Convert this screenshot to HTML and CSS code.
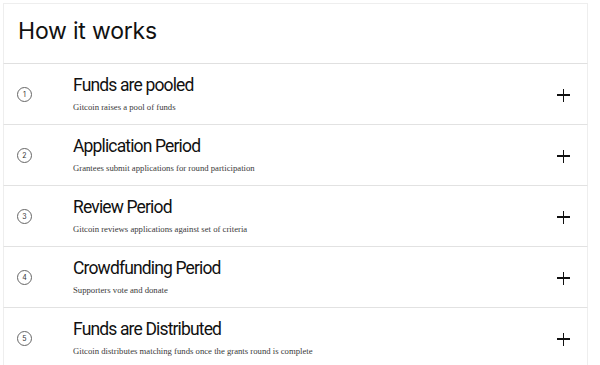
FILE: index.html
```html
<!DOCTYPE html>
<html>
<head>
<meta charset="utf-8">
<link rel="stylesheet" href="styles.css">
</head>
<body>
<section class="works">
  <header class="works-head"><h2>How it works</h2></header>
  <div class="step">
    <span class="num">1</span>
    <div class="text"><h3>Funds are pooled</h3><p>Gitcoin raises a pool of funds</p></div>
    <span class="plus"></span>
  </div>
  <div class="step">
    <span class="num">2</span>
    <div class="text"><h3>Application Period</h3><p>Grantees submit applications for round participation</p></div>
    <span class="plus"></span>
  </div>
  <div class="step">
    <span class="num">3</span>
    <div class="text"><h3>Review Period</h3><p>Gitcoin reviews applications against set of criteria</p></div>
    <span class="plus"></span>
  </div>
  <div class="step">
    <span class="num">4</span>
    <div class="text"><h3>Crowdfunding Period</h3><p>Supporters vote and donate</p></div>
    <span class="plus"></span>
  </div>
  <div class="step">
    <span class="num">5</span>
    <div class="text"><h3>Funds are Distributed</h3><p>Gitcoin distributes matching funds once the grants round is complete</p></div>
    <span class="plus"></span>
  </div>
</section>
</body>
</html>
```

FILE: styles.css
```css
html, body { margin: 0; padding: 0; background: #fff; }
body { padding: 3px 12px 0 3px; font-family: Inter, "Liberation Sans", sans-serif; color: #111; }
.works { display: flex; flex-direction: column; }
.works-head {
  height: 61px;
  border: 1px solid #eee;
  border-bottom: 1px solid #e0e0e0;
  box-sizing: border-box;
  display: flex; align-items: center;
  padding-left: 14px;
}
.works-head h2 { margin: 0; font-weight: 400; font-size: 23px; letter-spacing: -0.2px; padding-bottom: 6px; }
.step {
  height: 61px;
  box-sizing: border-box;
  border: 1px solid #eee;
  border-top: none;
  border-bottom: 1px solid #e2e2e2;
  display: flex; align-items: center;
  padding-left: 13px; padding-right: 17px;
}
.num {
  width: 15px; height: 15px; border: 1px solid #666; border-radius: 50%;
  box-sizing: border-box;
  font-size: 7px; line-height: 13px; text-align: center; color: #333;
  margin-right: 41px; flex: none;
}
.text { flex: 1; padding-bottom: 1px; }
.text h3 { margin: 0 0 5px; font-family: Roboto, "Liberation Sans", sans-serif; font-weight: 400; font-size: 17.5px; letter-spacing: -0.85px; line-height: 21px; color: #111; }
.text p { margin: 0; font-family: "Liberation Serif", serif; font-size: 8.7px; color: #3a3a3a; line-height: 12px; }
.plus { width: 13px; height: 13px; position: relative; flex: none; margin-top: 2px; }
.plus::before, .plus::after { content: ""; position: absolute; background: #111; }
.plus::before { left: 0; right: 0; top: 5.75px; height: 1.5px; }
.plus::after { top: 0; bottom: 0; left: 5.75px; width: 1.5px; }
```
